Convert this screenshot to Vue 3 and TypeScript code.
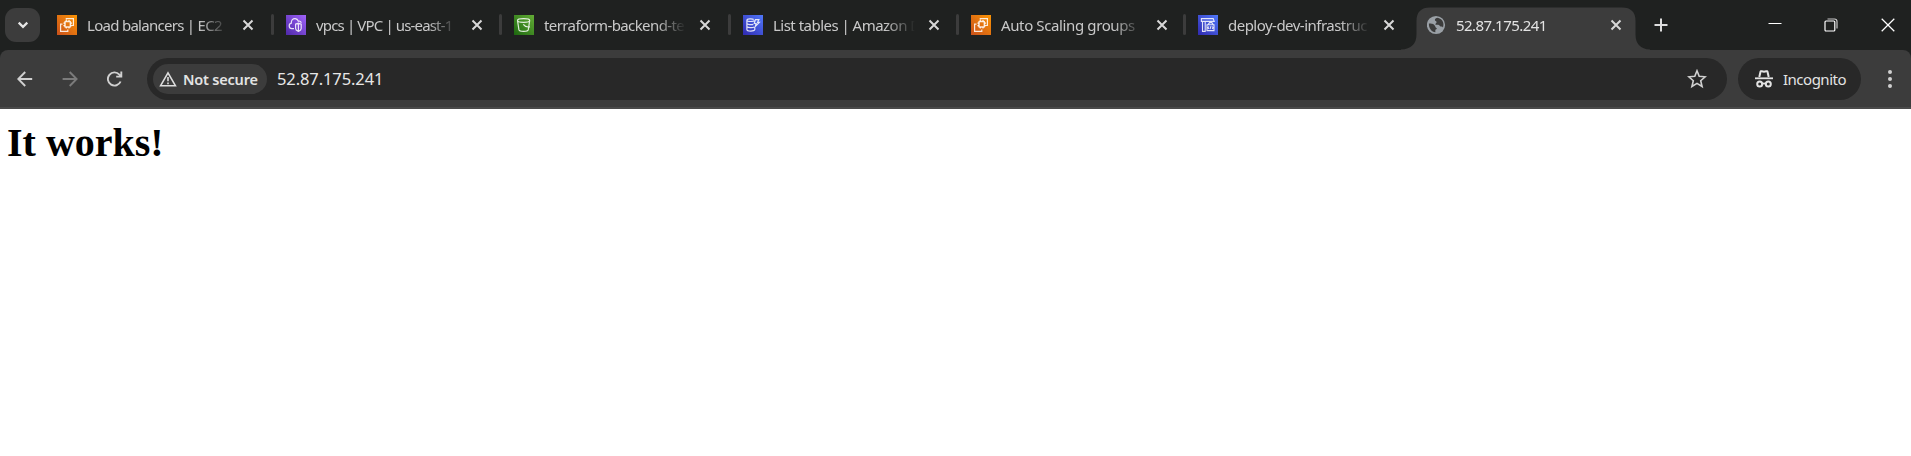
<script setup lang="ts">
type IconName = 'ec2' | 'vpc' | 's3' | 'dynamo' | 'deploy' | 'globe'
interface Tab { title: string; icon: IconName; width: number; spacing: number; active?: boolean }

const tabs: Tab[] = [
  { title: 'Load balancers | EC2', icon: 'ec2', width: 229, spacing: -0.72 },
  { title: 'vpcs | VPC | us-east-1', icon: 'vpc', width: 228, spacing: -0.85 },
  { title: 'terraform-backend-te', icon: 's3', width: 229, spacing: -0.6 },
  { title: 'List tables | Amazon D', icon: 'dynamo', width: 228, spacing: -0.52 },
  { title: 'Auto Scaling groups', icon: 'ec2', width: 227, spacing: -0.38 },
  { title: 'deploy-dev-infrastruc', icon: 'deploy', width: 229, spacing: -0.52 },
  { title: '52.87.175.241', icon: 'globe', width: 222, spacing: -0.54, active: true },
]
</script>

<template>
  <div class="browser">
    <header class="strip">
      <button class="search" aria-label="Search tabs">
        <svg width="12" height="8" viewBox="0 0 12 8"><path d="M1.7 1.6 6 5.9l4.3-4.3" fill="none" stroke="#e6e6e6" stroke-width="2.2" /></svg>
      </button>
      <div class="tabs">
        <div v-for="(tab, i) in tabs" :key="i" class="tab" :class="{ active: tab.active, split: i < 5 }" :style="{ width: tab.width + 'px' }">
          <svg v-if="tab.active" class="shape" width="249" height="43" viewBox="0 0 249 43"><path d="M0 43V42.5Q15.5 42 15.5 27V14Q15.5 .5 29 .5H221Q234.500 .5 234.500 14V27Q234.500 42 249 42.500V43Z" fill="#3c3c3c" /></svg>
          <span class="favicon" :class="tab.icon">
            <svg v-if="tab.icon === 'ec2'" viewBox="0 0 20 20"><rect x="8" y="6.600" width="5.400" height="5.400" rx=".6" stroke-width="1.500" /><path d="M9.300 4.800V3.600h7.100v6.900H15M5.500 9.200H3.600v7.100h7.200v-1.700M9.300 5v1.600m2.700-1.600v1.600M6.400 8.200H8m-1.600 2.500H8m5.400-2.500H15m-1.600 2.500H15M9.300 12v1.600m2.700-1.600v1.600" /></svg>
            <svg v-else-if="tab.icon === 'vpc'" viewBox="0 0 20 20"><path d="M8 13.7H5.8a2.8 2.8 0 0 1-.5-5.5C5.100 5 7 3.500 9.200 3.700c1.700.2 2.600 1.100 3.200 2.500 1.600-.5 2.600.4 2.800 1.700M9.600 9.100l2.800-1 2.800 1v4.300c0 1.400-1.200 2.300-2.800 3-1.600-.7-2.800-1.600-2.800-3zM12.400 8.300v7.800" /></svg>
            <svg v-else-if="tab.icon === 's3'" viewBox="0 0 20 20"><path d="M3.500 5.500c0-1.100 2.600-1.800 6.100-1.800s6.100.7 6.100 1.800-2.600 1.800-6.100 1.800-6.100-.7-6.100-1.800l1.400 9.200c.2 1 2.100 1.700 4.700 1.700s4.500-.7 4.700-1.700l1.400-9.200M9.300 9.300c1.300 1.800 4.400 3 6.700 2.500" /></svg>
            <svg v-else-if="tab.icon === 'dynamo'" viewBox="0 0 20 20"><path d="M10.700 4.500c-1.200-1-6.800-1-6.800.7 0 1.800 6.700 1.600 7.400.2M3.900 5.200v9.300c0 2.100 7.900 2.100 7.900 0v-2M4 8.500c.8 1.200 4.500 1.400 6.300.9M4 11.600c1 1.300 5.600 1.500 7.300.4M12.400 4.600h3.500l-1.300 2.700h1.800l-4.100 4.200.8-3h-1.800z" /></svg>
            <svg v-else-if="tab.icon === 'deploy'" viewBox="0 0 20 20"><path d="M3.400 6.400V3.600h11.800l1 2.800zM4.500 6.700v9.700h2.700V6.700M9 15.600V9.800h7v5.800zM10 9.600l1.600-2h2.200l1.400 2M10.900 11.500l-1 1.200 1 1.200m3.300-2.400 1 1.200-1 1.200m-1.200-2.700-1 3" stroke-width="1.1" /></svg>
            <svg v-else viewBox="0 0 20 20"><circle cx="9" cy="10" r="9.100" fill="#9aa0a6" stroke="none" /><path class="land" d="M1.900 8.600c2.100.2 4 .1 5.400 1.300 1.500 1.200.7 2.300 2.100 3.100 1 .6.1 1.500-.7 1.500-.5 0-.3 1.500-.3 2.800C4.600 17 1.700 13.600 1.900 8.600zM10.500 2.800c-1.400.1-2.600.8-2.600 2.300 0 1.200 1.700.9 1.700 2s-1.300 1.500-1.200 2.300c.1.7 2.600-.1 3.500.7.9.8 1.100 1.500 2.500 1.500.8 0 1.300.2 1.600.8C17.700 7.700 14.900 3.500 10.500 2.800z" /></svg>
          </span>
          <span class="title" :style="{ letterSpacing: tab.spacing + 'px' }">{{ tab.title }}</span>
          <svg class="close" width="12" height="12" viewBox="0 0 12 12"><path d="m1.500 1.500 9 9m0-9-9 9" /></svg>
        </div>
      </div>
      <svg class="plus" width="14" height="14" viewBox="0 0 14 14"><path d="M7 .5v13M.5 7h13" fill="none" stroke="#ddd" stroke-width="2" /></svg>
      <div class="controls">
        <svg width="14" height="14" viewBox="0 0 14 14"><path d="M.5 5.500h13" /></svg>
        <svg width="14" height="14" viewBox="0 0 14 14"><path d="M3.500 1H10.500Q13 1 13 3.500V10.500" stroke="#c8c8c8" stroke-width="1.200" /><rect x="1" y="3" width="9.800" height="10" rx="1" stroke-width="1.200" /></svg>
        <svg width="14" height="14" viewBox="0 0 14 14"><path d="m.7.7 12.600 12.600m0-12.600L.7 13.300" stroke-width="1.250" /></svg>
      </div>
    </header>
    <nav class="toolbar">
      <svg class="nav" width="16" height="16" viewBox="0 0 16 16"><path d="M15.200 8H1.500M8.200 1 1.300 8l6.900 7" /></svg>
      <svg class="nav dim" width="16" height="16" viewBox="0 0 16 16"><path d="M.6 8h13.800M7.700 1l6.900 7-6.900 7" /></svg>
      <svg class="nav" width="16" height="16" viewBox="0 0 16 16"><path d="M13.600 10.500A6.600 6.600 0 1 1 12.400 3.600L14 5.200M14.300.5V5.600H9.200" /></svg>
      <div class="address">
        <div class="chip">
          <svg width="18" height="16" viewBox="0 0 18 16"><path d="M9 1.800 16.400 14.700H1.600z" fill="none" stroke="#ddd" stroke-width="1.600" /><path d="M9 6v4.200M9 11.500v1.700" stroke="#ddd" stroke-width="1.600" /></svg>
          <span>Not secure</span>
        </div>
        <span class="url">52.87.175.241</span>
        <svg class="star" width="20" height="20" viewBox="0 0 20 20"><path d="m10 1.800 2.200 5.500 6 .5-4.500 3.900 1.400 5.800-5.100-3.100-5.100 3.100 1.400-5.800-4.500-3.900 6-.5z" fill="none" stroke="#d0d0d0" stroke-width="1.600" /></svg>
      </div>
      <div class="incognito">
        <svg width="18" height="18" viewBox="0 0 18 18" fill="none" stroke="#e3e3e3"><path d="M4.300 7 5.500 1.800Q5.700.9 6.800 1.200L9 1.800l2.200-.6q1.100-.3 1.300.6L13.700 7" stroke-width="2" /><path d="M0 8.300h18" stroke-width="1.800" /><circle cx="4.700" cy="14.100" r="2.500" stroke-width="2" /><circle cx="13.300" cy="14.100" r="2.500" stroke-width="2" /><path d="M7.100 13.900q1.900-1.100 3.800 0" stroke-width="1.700" /></svg>
        <span>Incognito</span>
      </div>
      <svg class="menu" width="4" height="18" viewBox="0 0 4 18"><circle cx="2" cy="2" r="2" /><circle cx="2" cy="9" r="2" /><circle cx="2" cy="16" r="2" /></svg>
    </nav>
    <main><h1>It works!</h1></main>
  </div>
</template>

<style>
body { margin: 0; background: #fff; }
</style>

<style scoped>
.browser { width: 1911px; height: 456px; overflow: hidden; background: #fff; font-family: "Noto Sans", "Open Sans", sans-serif; }
.browser * { box-sizing: border-box; }
svg { display: block; flex: none; }
.strip { height: 50px; display: flex; align-items: center; background: #1f2120; }
.search { width: 35px; height: 34px; margin-left: 5px; border: 0; border-radius: 11px; background: #3c3c3c; padding: 0; display: flex; align-items: center; justify-content: center; flex: none; }
.tabs { display: flex; margin-left: 5px; height: 50px; }
.tab { position: relative; display: flex; align-items: center; padding-left: 12px; flex: none; }
.split::after { content: ""; position: absolute; right: 0; top: 14px; width: 3px; height: 21px; border-radius: 2px; background: #3c3c3c; }
.shape { position: absolute; left: -14px; top: 7px; }
.favicon { position: relative; width: 20px; height: 20px; flex: none; }
.favicon svg { width: 20px; height: 20px; fill: none; stroke: #fff; stroke-opacity: .85; stroke-width: 1.2; }
.ec2 { background: linear-gradient(45deg, #c9501b, #fb9505); }
.vpc { background: linear-gradient(45deg, #4e28a8, #a063fa); }
.s3 { background: linear-gradient(45deg, #1c670f, #64ad36); }
.dynamo, .deploy { background: linear-gradient(45deg, #3029af, #5078fa); }
.favicon .land { fill: #3c3c3c; stroke: none; }
.title { position: relative; width: 142px; margin-left: 10px; white-space: nowrap; font-size: 15px; line-height: 24px; color: #c9c9c9; mask-image: linear-gradient(90deg, #000 112px, transparent 142px); }
.active .title { color: #e3e3e3; margin-left: 9px; }
.close { position: relative; margin-left: 13px; fill: none; stroke: #d8d8d8; stroke-width: 2; }
.active .close { margin-left: 12px; }
.plus { margin-left: 17px; }
.controls { margin-left: auto; display: flex; gap: 43px; padding-right: 16px; }
.controls svg { fill: none; stroke: #fff; }
.controls svg:first-child { margin-right: -1px; }
.toolbar { height: 59px; border-bottom: 2px solid #4a4a4a; border-radius: 8px 8px 0 0; background: #3c3c3c; display: flex; align-items: center; padding-left: 17px; box-shadow: 0 -8px 0 #1f2120; }
.toolbar { box-shadow: none; }
.browser { background: linear-gradient(#1f2120 60px, #fff 60px); }
.nav { fill: none; stroke: #d0d0d0; stroke-width: 1.9; margin-right: 29px; }
.dim { stroke: #7b7b7b; }
.address { width: 1580px; height: 42px; margin-left: -5px; border-radius: 21px; background: #282828; display: flex; align-items: center; padding: 0 20px 0 6px; }
.chip { width: 114px; height: 30px; border-radius: 15px; background: #3c3c3c; display: flex; align-items: center; padding-left: 6px; gap: 6px; color: #e3e3e3; font-size: 14.5px; font-weight: 600; letter-spacing: -.2px; white-space: nowrap; }
.url { margin-left: 10px; color: #e6e6e6; font-size: 16.5px; letter-spacing: -.1px; }
.star { margin-left: auto; }
.incognito { width: 123px; height: 42px; margin-left: 11px; border-radius: 21px; background: #282828; color: #e3e3e3; display: flex; align-items: center; gap: 10px; padding-left: 17px; font-size: 15px; letter-spacing: -.5px; }
.menu { margin-left: 27px; fill: #d0d0d0; }
main { padding: 11px 7px; }
h1 { margin: 0; color: #000; font: bold 40px/46px "Liberation Serif", "Times New Roman", serif; }
</style>
